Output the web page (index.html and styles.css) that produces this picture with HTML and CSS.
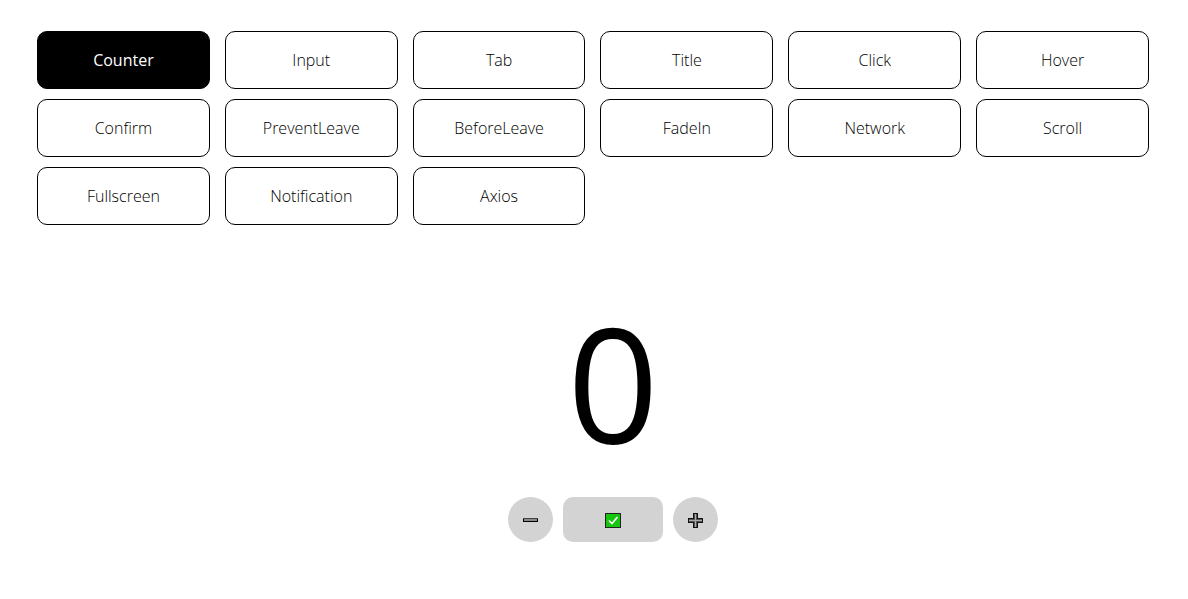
FILE: index.html
```html
<!DOCTYPE html>
<html lang="en">
<head>
<meta charset="utf-8">
<meta name="viewport" content="width=device-width, initial-scale=1">
<title>Counter</title>
<link rel="stylesheet" href="styles.css">
</head>
<body>
<nav class="menu">
  <button class="menu-item active" type="button">Counter</button>
  <button class="menu-item" type="button">Input</button>
  <button class="menu-item" type="button">Tab</button>
  <button class="menu-item" type="button">Title</button>
  <button class="menu-item" type="button">Click</button>
  <button class="menu-item" type="button">Hover</button>
  <button class="menu-item" type="button">Confirm</button>
  <button class="menu-item" type="button">PreventLeave</button>
  <button class="menu-item" type="button">BeforeLeave</button>
  <button class="menu-item" type="button">FadeIn</button>
  <button class="menu-item" type="button">Network</button>
  <button class="menu-item" type="button">Scroll</button>
  <button class="menu-item" type="button">Fullscreen</button>
  <button class="menu-item" type="button">Notification</button>
  <button class="menu-item" type="button">Axios</button>
</nav>
<main class="counter">
  <output class="count">0</output>
  <div class="controls">
    <button class="control round" type="button" aria-label="Decrease">
      <svg class="icon" viewBox="0 0 16 16" aria-hidden="true">
        <path fill="#444" d="M0 6h15v1H0z"/>
        <path fill="#000" d="M0 7h15v3H0z"/>
        <path fill="#888" d="M1 7h13v2H1z"/>
      </svg>
    </button>
    <button class="control wide" type="button" aria-label="Apply">
      <svg class="icon" viewBox="0 0 16 16" aria-hidden="true">
        <path fill="#222" d="M0 1h16v15H0z"/>
        <path fill="#16c60c" d="M1 2h14v13H1z"/>
        <path fill="none" stroke="#fff" stroke-width="1.6" d="M4 8.500l3 3 5.500-6.500"/>
      </svg>
    </button>
    <button class="control round" type="button" aria-label="Increase">
      <svg class="icon" viewBox="0 0 16 16" aria-hidden="true">
        <path fill="#111" d="M5 1h5v5h5v5h-5v5H5v-5H0V6h5z"/>
        <path fill="#555" d="M6 2h3v5h5v3H9v5H6v-5H1V7h5z"/>
        <path fill="#aaa" d="M7 2h1v6h6v1H8v6H7V9H1V8h6z"/>
      </svg>
    </button>
  </div>
</main>
</body>
</html>
```

FILE: styles.css
```css
* {
  box-sizing: border-box;
}

body {
  margin: 0;
  padding: 31px 39px 31px 37px;
  background: #fff;
  color: #000;
  font-family: "Open Sans", "Noto Sans", sans-serif;
  font-size: 16px;
}

button {
  padding: 0;
  color: inherit;
  font: inherit;
  cursor: pointer;
}

.menu {
  display: grid;
  grid-template-columns: repeat(6, 1fr);
  gap: 10px 15px;
}

.menu-item {
  height: 58px;
  border: 1px solid #000;
  border-radius: 10px;
  background: #fff;
  font-weight: 300;
}

.menu-item.active {
  background: #000;
  color: #fff;
  font-weight: 400;
}

.counter {
  display: flex;
  flex-direction: column;
  align-items: center;
  padding: 52px 0 0 40px;
}

.count {
  font-size: 160px;
  line-height: 208px;
}

.controls {
  display: flex;
  gap: 10px;
  margin-top: 12px;
}

.control {
  display: flex;
  align-items: center;
  justify-content: center;
  height: 45px;
  border: 0;
  background: #d3d3d3;
}

.round {
  width: 45px;
  border-radius: 50%;
}

.wide {
  width: 100px;
  border-radius: 10px;
}

.icon {
  width: 16px;
  height: 16px;
}
```
